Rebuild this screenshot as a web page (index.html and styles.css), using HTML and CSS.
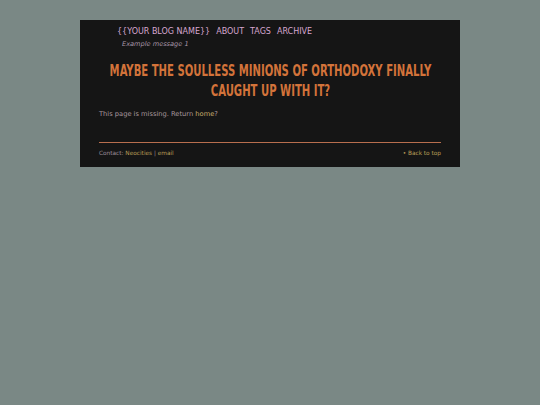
FILE: index.html
```html
<!DOCTYPE html>
<html>
<head>
<meta charset="utf-8">
<link rel="stylesheet" href="styles.css">
</head>
<body>
<div class="page">
  <nav class="nav">
    <a href="#">{{YOUR BLOG NAME}}</a>
    <a href="#">ABOUT</a>
    <a href="#">TAGS</a>
    <a href="#">ARCHIVE</a>
  </nav>
  <p class="message">Example message 1</p>
  <h1 class="title"><span class="title-inner">MAYBE THE SOULLESS MINIONS OF ORTHODOXY FINALLY CAUGHT UP WITH IT?</span></h1>
  <p class="text">This page is missing. Return <a href="#">home</a>?</p>
  <hr class="rule">
  <footer class="footer">
    <span>Contact: <a href="#">Neocities</a> | <a href="#">email</a></span>
    <a href="#">&#8226; Back to top</a>
  </footer>
</div>
</body>
</html>
```
FILE: styles.css
```css
html, body {
  margin: 0;
  padding: 0;
  background: #7a8885;
}
body {
  font-family: "DejaVu Sans", sans-serif;
}
.page {
  width: 380px;
  margin: 20px 0 0 80px;
  background: #151515;
  padding: 0 19px 10px;
  box-sizing: border-box;
  min-height: 147px;
  overflow: hidden;
}
a {
  text-decoration: none;
  color: inherit;
}
.nav {
  display: flex;
  gap: 6px;
  padding: 7px 0 0 18px;
  font-size: 8px;
  color: #d6a6cf;
  line-height: 10px;
}
.message {
  margin: 3px 0 0 23px;
  font-size: 6.6px;
  font-style: italic;
  color: #a896a8;
  line-height: 8px;
}
.title {
  margin: 13px 0 0;
  text-align: center;
  font-family: "DejaVu Sans Condensed", "DejaVu Sans", sans-serif;
  font-stretch: condensed;
  font-weight: bold;
  font-size: 16px;
  line-height: 20px;
  color: #d3733a;
}
.title-inner {
  display: block;
  width: 489px;
  margin-left: -73.5px;
  transform: scaleX(0.7);
  transform-origin: center;
}
.text {
  margin: 9px 0 0;
  font-size: 6.7px;
  line-height: 9px;
  color: #a8999f;
}
.text a {
  color: #c9ad6c;
}
.rule {
  margin: 23px 0 0;
  border: 0;
  height: 1px;
  background: #b86e4e;
}
.footer {
  display: flex;
  justify-content: space-between;
  margin-top: 7px;
  font-size: 5.8px;
  line-height: 7px;
  color: #9a8c98;
}
.footer a {
  color: #b89d55;
}
```
